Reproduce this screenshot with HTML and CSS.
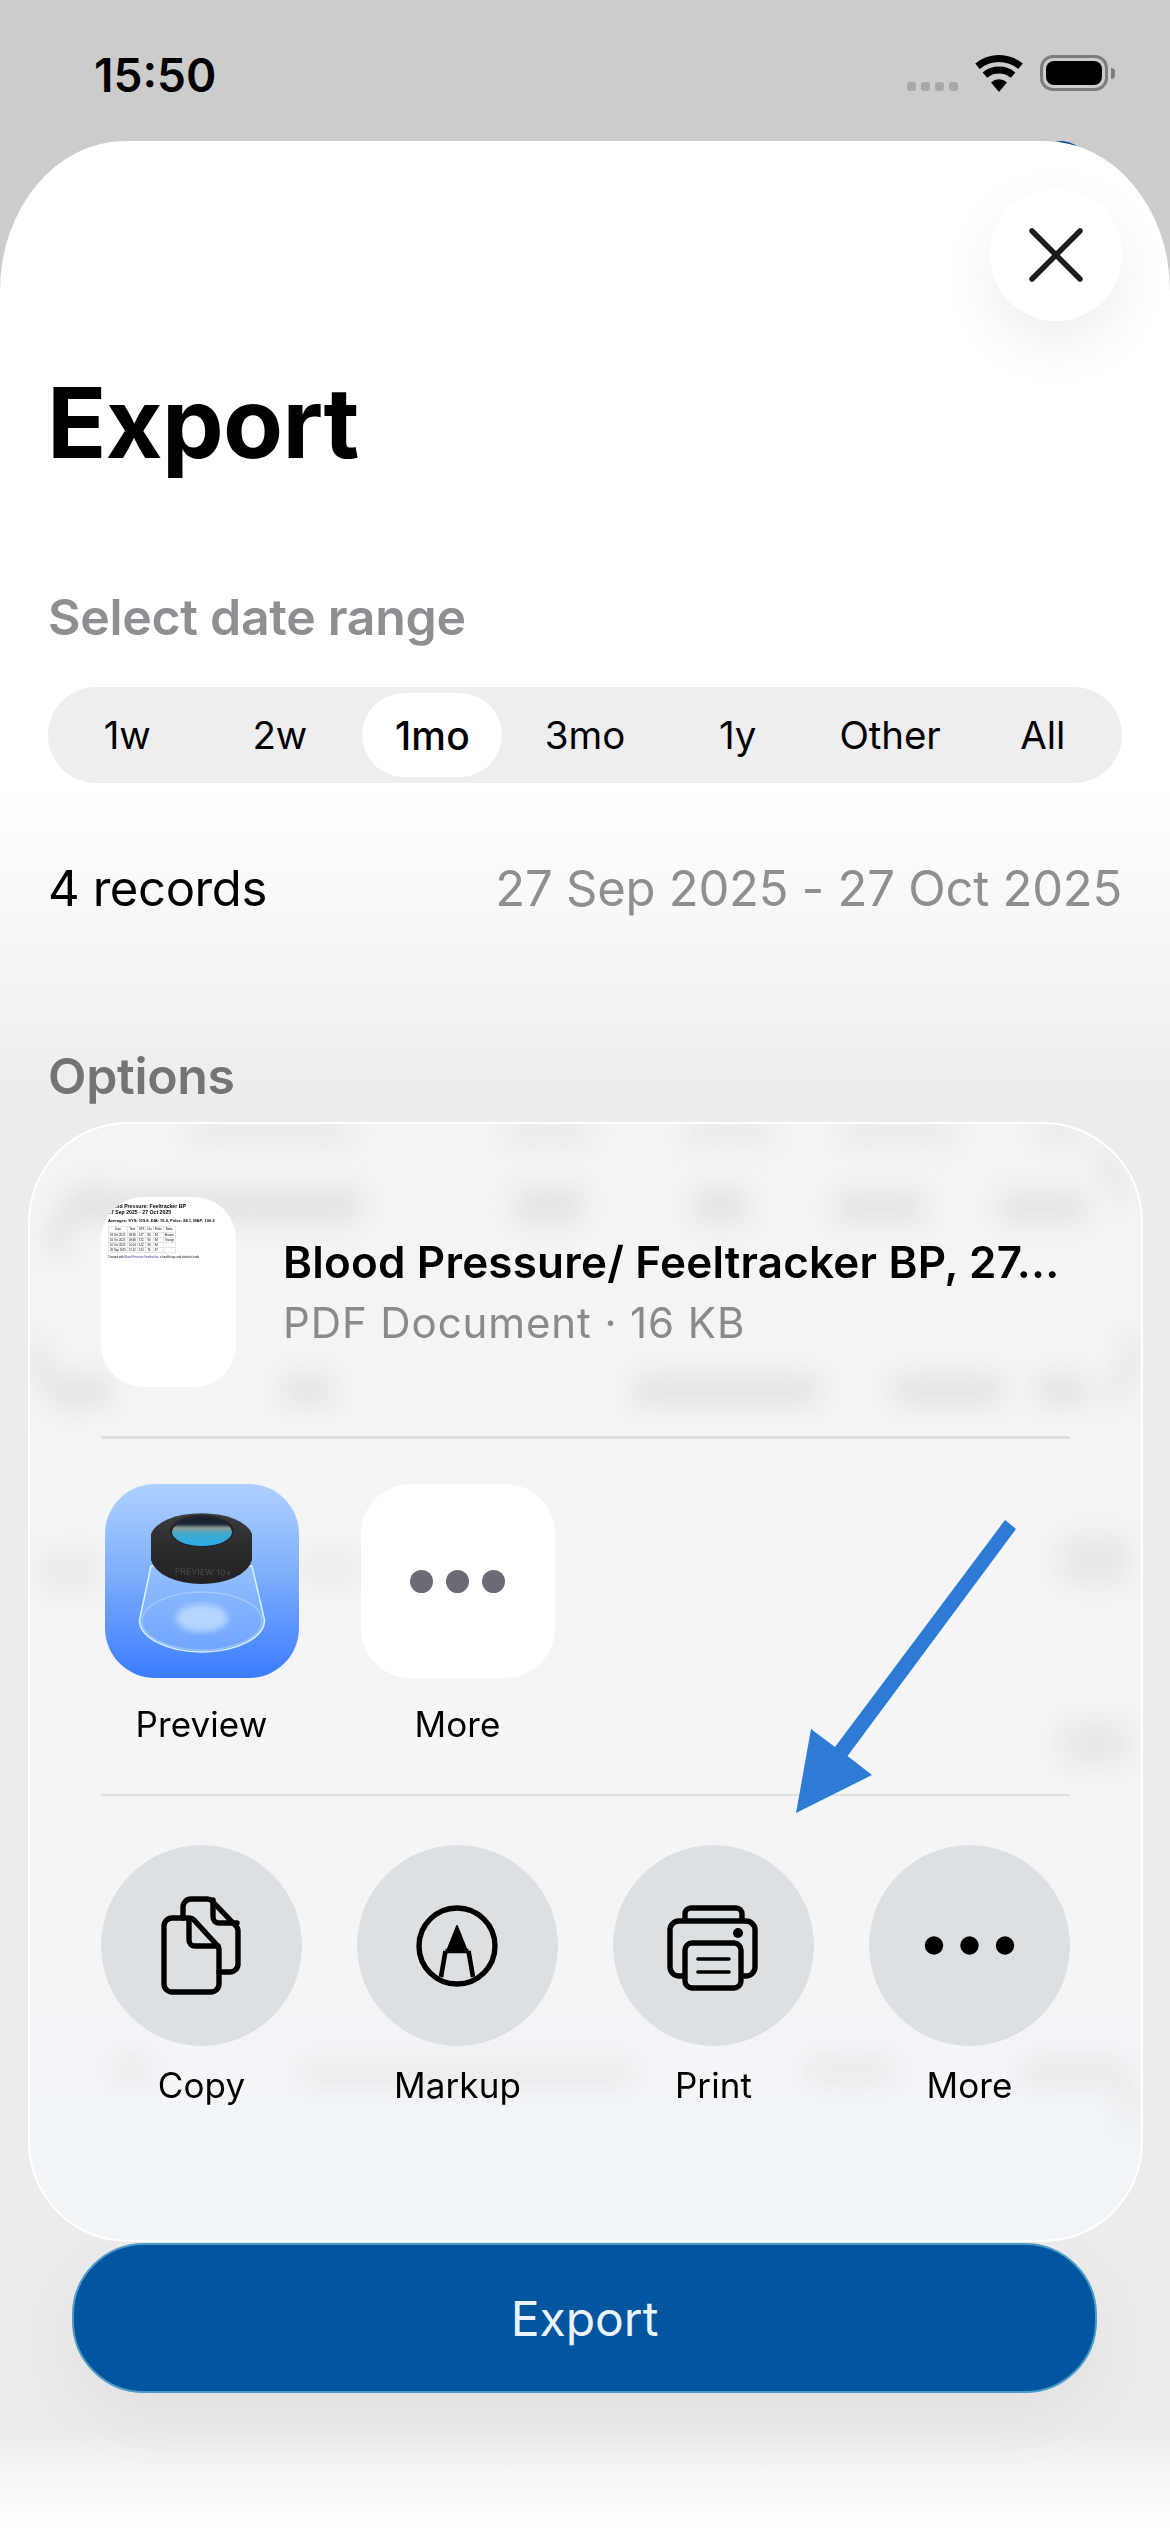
FILE: index.html
```html
<!DOCTYPE html>
<html lang="en">
<head>
<meta charset="utf-8">
<title>Export</title>
<link rel="stylesheet" href="styles.css">
</head>
<body>
<div class="phone">
  <header class="status">
    <span class="time">15:50</span>
    <div class="status-icons">
      <div class="signal"><i></i><i></i><i></i><i></i></div>
      <svg class="wifi" viewBox="0 0 48 37" width="48" height="37">
        <path d="M2.5 11.3A33.5 33.5 0 0 1 45.5 11.3" fill="none" stroke="#000" stroke-width="7"/>
        <path d="M9.9 20.1A22 22 0 0 1 38.1 20.1" fill="none" stroke="#000" stroke-width="7"/>
        <path d="M24 37L16 27.4A12 12 0 0 1 32 27.4Z" fill="#000"/>
      </svg>
      <div class="battery"><div class="battery-body"><div class="battery-fill"></div></div><div class="battery-nub"></div></div>
    </div>
  </header>
  <div class="peek"></div>

  <main class="sheet">
    <div class="sheet-top">
      <button class="close" aria-label="Close">
        <svg viewBox="0 0 56 56" width="56" height="56"><path d="M4 4L52 52M52 4L4 52" stroke="#1c1c1e" stroke-width="5.5" stroke-linecap="round" fill="none"/></svg>
      </button>
    </div>
    <h1 class="title">Export</h1>
    <h2 class="label">Select date range</h2>
    <div class="segments">
      <span class="seg">1w</span>
      <span class="seg">2w</span>
      <span class="seg seg-on">1mo</span>
      <span class="seg">3mo</span>
      <span class="seg">1y</span>
      <span class="seg">Other</span>
      <span class="seg">All</span>
    </div>
    <div class="records">
      <span class="records-count">4 records</span>
      <span class="records-range">27 Sep 2025 - 27 Oct 2025</span>
    </div>
    <h2 class="label label-options">Options</h2>

    <section class="card">
      <svg class="card-blur" viewBox="28 1122 1115 1120" aria-hidden="true">
        <defs><filter id="soft" x="-20%" y="-20%" width="140%" height="140%"><feGaussianBlur stdDeviation="13"/></filter></defs>
        <g filter="url(#soft)" fill="#dedede" stroke="none" opacity=".8">
          <rect x="190" y="1126" width="160" height="14"/><rect x="507" y="1126" width="83" height="14"/><rect x="687" y="1126" width="85" height="14"/><rect x="843" y="1126" width="112" height="14"/><rect x="1037" y="1126" width="45" height="14"/>
          <rect x="70" y="1190" width="290" height="32"/><rect x="515" y="1190" width="67" height="32"/><rect x="694" y="1190" width="52" height="32"/><rect x="836" y="1193" width="87" height="28"/><rect x="1000" y="1193" width="85" height="28"/>
          <rect x="60" y="1376" width="50" height="28"/><rect x="283" y="1376" width="50" height="28"/><rect x="634" y="1376" width="186" height="28"/><rect x="893" y="1376" width="110" height="28"/><rect x="1037" y="1376" width="50" height="28"/>
          <path d="M58 1255Q55 1205 100 1190" fill="none" stroke="#dedede" stroke-width="18"/>
          <path d="M36 1340Q40 1395 80 1405" fill="none" stroke="#dedede" stroke-width="16"/>
          <path d="M1095 1150Q1122 1170 1122 1200" fill="none" stroke="#dedede" stroke-width="14"/>
          <path d="M1135 1335Q1130 1385 1105 1400" fill="none" stroke="#dedede" stroke-width="14"/>
          <rect x="1060" y="1535" width="70" height="50" opacity=".7"/><rect x="1060" y="1720" width="70" height="46" opacity=".7"/>
          <rect x="40" y="1550" width="60" height="42" opacity=".55"/><rect x="300" y="1550" width="60" height="36" opacity=".45"/>
          <rect x="112" y="2058" width="40" height="24" opacity=".6"/><rect x="300" y="2060" width="334" height="26" opacity=".55"/><rect x="806" y="2058" width="90" height="26" opacity=".6"/><rect x="1022" y="2060" width="105" height="26" opacity=".7"/><rect x="1120" y="2080" width="16" height="50" opacity=".6"/>
        </g>
      </svg>

      <div class="file">
        <div class="thumb">
          <p class="doc-title">Blood Pressure: Feeltracker BP<br>27 Sep 2025 - 27 Oct 2025</p>
          <p class="doc-avg">Averages: SYS: 119.8, DIA: 76.0, Pulse: 84.1, MAP: 100.3</p>
          <table class="doc-table">
            <tr><th>Date</th><th>Time</th><th>SYS</th><th>Dia</th><th>Pulse</th><th>Notes</th></tr>
            <tr><td>18 Oct 2025</td><td>09:56</td><td>127</td><td>84</td><td>84</td><td>Bruises</td></tr>
            <tr><td>16 Oct 2025</td><td>09:48</td><td>172</td><td>90</td><td>84</td><td>Orange</td></tr>
            <tr><td>10 Oct 2025</td><td>10:04</td><td>122</td><td>90</td><td>84</td><td></td></tr>
            <tr><td>28 Sep 2025</td><td>11:12</td><td>124</td><td>76</td><td>87</td><td></td></tr>
          </table>
          <p class="doc-foot">Created with <span class="doc-link">Blood Pressure Feeltracker</span>, a health logs and statistics tools</p>
        </div>
        <div class="file-info">
          <div class="file-name">Blood Pressure/ Feeltracker BP, 27...</div>
          <div class="file-meta">PDF Document · 16 KB</div>
        </div>
      </div>
      <hr class="rule rule-one">

      <div class="grid apps">
        <div class="cell">
          <svg class="app-icon" viewBox="0 0 194 194" width="194" height="194">
            <defs>
              <linearGradient id="appbg" x1="0" y1="0" x2="0" y2="1"><stop offset="0" stop-color="#aed0ff"/><stop offset=".45" stop-color="#7fb0fb"/><stop offset="1" stop-color="#3b7cff"/></linearGradient>
              <linearGradient id="capbg" x1="0" y1="0" x2="0" y2="1"><stop offset="0" stop-color="#3c3c3e"/><stop offset=".45" stop-color="#2c2c2e"/><stop offset="1" stop-color="#222224"/></linearGradient>
              <linearGradient id="lens" x1="0" y1="0" x2="0" y2="1"><stop offset="0" stop-color="#141c2c"/><stop offset=".22" stop-color="#1e2a3c"/><stop offset=".36" stop-color="#8f9c94"/><stop offset=".55" stop-color="#42a8cc"/><stop offset="1" stop-color="#27aeea"/></linearGradient>
              <linearGradient id="glass" x1="0" y1="0" x2="0" y2="1"><stop offset="0" stop-color="#b9dcff" stop-opacity=".3"/><stop offset="1" stop-color="#a6cfff" stop-opacity=".4"/></linearGradient>
              <filter id="spot"><feGaussianBlur stdDeviation="3"/></filter>
            </defs>
            <rect width="194" height="194" rx="50" fill="url(#appbg)"/>
            <path d="M46 82L34.500 136A62.500 32 0 0 0 159.500 136L147 82Z" fill="url(#glass)" stroke="#d4f0ff" stroke-width="1.600"/>
            <ellipse cx="97" cy="137" rx="60" ry="29" fill="none" stroke="#cfe6ff" stroke-opacity=".4" stroke-width="1.500"/>
            <ellipse cx="97" cy="134" rx="26" ry="14" fill="#b5d6ff" filter="url(#spot)"/>
            <path d="M46 50A51 24 0 0 1 147 50L147 76A51 28 0 0 1 46 76Z" fill="url(#capbg)"/>
            <ellipse cx="97" cy="47" rx="32" ry="16" fill="#24242c"/>
            <ellipse cx="97" cy="48" rx="30" ry="14" fill="url(#lens)"/>
            <text class="app-engrave" x="98" y="91" text-anchor="middle" transform="rotate(2 98 91)">PREVIEW 10×</text>
          </svg>
          <span class="cell-label">Preview</span>
        </div>
        <div class="cell">
          <div class="more-tile"><i></i><i></i><i></i></div>
          <span class="cell-label">More</span>
        </div>
      </div>
      <hr class="rule rule-two">

      <div class="grid actions">
        <div class="cell">
          <svg class="action" viewBox="0 0 201 201" width="201" height="201">
            <g fill="none" stroke="#000" stroke-width="5.400" stroke-linejoin="round" stroke-linecap="round">
              <path d="M82 73V62a8 8 0 0 1 8-8H106a7 7 0 0 1 5 2L134 80a8 8 0 0 1 3 6V119a8 8 0 0 1-8 8H118"/>
              <path d="M112 55V72a6 6 0 0 0 6 6H136"/>
              <path d="M71 73H88a7 7 0 0 1 5 2L115 99a8 8 0 0 1 3 6V139a8 8 0 0 1-8 8H71a8 8 0 0 1-8-8V81a8 8 0 0 1 8-8z"/>
              <path d="M88 74V95a6 6 0 0 0 6 6H117"/>
            </g>
          </svg>
          <span class="cell-label cell-label-action">Copy</span>
        </div>
        <div class="cell">
          <svg class="action" viewBox="0 0 201 201" width="201" height="201">
            <circle cx="100" cy="101" r="38" fill="none" stroke="#000" stroke-width="5.400"/>
            <path d="M100 81L110 106H90Z" fill="#000" stroke="#000" stroke-width="2" stroke-linejoin="round"/>
            <path d="M88.500 106H111.500M88.500 106L84 132M111.500 106L116 132" fill="none" stroke="#000" stroke-width="4.600"/>
          </svg>
          <span class="cell-label cell-label-action">Markup</span>
        </div>
        <div class="cell">
          <svg class="action" viewBox="0 0 201 201" width="201" height="201">
            <g fill="none" stroke="#000" stroke-width="5.400" stroke-linejoin="round">
              <path d="M72 74V69a6 6 0 0 1 6-6H123a6 6 0 0 1 6 6V74"/>
              <path d="M72 131H66a9 9 0 0 1-9-9V85a9 9 0 0 1 9-9H133a9 9 0 0 1 9 9V122a9 9 0 0 1-9 9H128"/>
              <rect x="72" y="98" width="56" height="45" rx="7"/>
            </g>
            <path d="M85 114H116M85 127H116" stroke="#000" stroke-width="3.600" stroke-linecap="round"/>
            <circle cx="125" cy="88" r="5" fill="#000"/>
          </svg>
          <span class="cell-label cell-label-action">Print</span>
        </div>
        <div class="cell">
          <svg class="action" viewBox="0 0 201 201" width="201" height="201">
            <circle cx="65" cy="100.500" r="9.200"/><circle cx="100.500" cy="100.500" r="9.200"/><circle cx="136" cy="100.500" r="9.200"/>
          </svg>
          <span class="cell-label cell-label-action">More</span>
        </div>
      </div>
    </section>

    <button class="export">Export</button>
  </main>

  <svg class="arrow" viewBox="790 1515 235 305" width="235" height="305" aria-hidden="true">
    <path d="M1005 1520L1016 1529L847.500 1756L872 1775L796 1813L811 1729L835 1747Z" fill="#2d7bd4"/>
  </svg>
</div>
</body>
</html>
```

FILE: styles.css
```css
* { box-sizing: border-box; }
html, body { margin: 0; padding: 0; }
body { background: #fff; font-family: Inter, "Liberation Sans", sans-serif; color: #000; }

.phone { position: relative; width: 1170px; height: 2532px; overflow: hidden; background: #ccc; }

/* Status bar */
.status { height: 141px; padding: 50px 55px 0 94px; display: flex; justify-content: space-between; align-items: flex-start; }
.time { font-size: 46px; line-height: 50px; font-weight: 600; letter-spacing: 0; }
.status-icons { display: flex; align-items: flex-start; padding-top: 5px; }
.signal { display: flex; gap: 5px; margin: 27px 17px 0 0; }
.signal i { display: block; width: 9px; height: 9px; border-radius: 3px; background: #a8a8a8; }
.wifi { display: block; margin-right: 17px; }
.battery { display: flex; align-items: center; }
.battery-body { width: 68px; height: 36px; padding: 3px; border: 3px solid #7d7d7d; border-radius: 13px; }
.battery-fill { width: 100%; height: 100%; background: #000; border-radius: 8px; }
.battery-nub { width: 4px; height: 11px; margin-left: 3px; background: #7d7d7d; border-radius: 0 4px 4px 0; }
.peek { position: absolute; left: 1038px; top: 141px; width: 46px; height: 40px; border-radius: 50%; background: #0a4f98; }

/* Sheet */
.sheet {
  position: relative; height: 2391px; padding: 0 48px 0 50px;
  border-radius: 125px 125px 0 0 / 150px 150px 0 0;
  background: linear-gradient(180deg, #fff 640px, #f3f3f3 860px, #ececec 960px, #ececec 2290px, #f6f6f6 2334px, #fff 2391px);
}
.sheet-top { display: flex; justify-content: flex-end; padding-top: 47px; }
.close {
  width: 132px; height: 133px; padding: 0; border: 0; border-radius: 50%; background: #fff;
  display: flex; align-items: center; justify-content: center;
  box-shadow: 0 22px 60px rgba(0, 0, 0, .07);
}
.title { margin: 52px 0 0 -3px; font-size: 98px; line-height: 100px; font-weight: 700; letter-spacing: -.7px; }
.label { margin: 114px 0 0 -2px; font-size: 50px; line-height: 60px; font-weight: 600; color: #8e8e93; letter-spacing: -.3px; }
.label-options { margin-top: 127px; color: #747474; }

.segments {
  margin: 40px 0 0 -2px; height: 96px; padding: 0 3px; border-radius: 48px; background: #eeeef0;
  display: grid; grid-template-columns: repeat(7, 1fr); align-items: center; justify-items: center;
}
.seg { width: 140px; height: 84px; border-radius: 42px; display: flex; align-items: center; justify-content: center; font-size: 38.500px; font-weight: 400; letter-spacing: -.1px; }
.seg-on { background: #fff; font-weight: 500; font-size: 39px; letter-spacing: .2px; }

.records { margin-top: 76px; display: flex; justify-content: space-between; font-size: 49px; line-height: 60px; letter-spacing: -.25px; }
.records-count { margin-left: -2px; letter-spacing: -.4px; }
.records-range { color: #8e8e93; }

/* Share card */
.card {
  position: relative; overflow: hidden; width: 1115px; height: 1120px; margin: 16px 0 0 -22px;
  padding: 73px 71px 0; border: 2px solid #fff; border-radius: 100px;
  background: linear-gradient(180deg, #f4f4f5 0%, #f5f5f6 55%, #f2f5f8 100%);
}
.card-blur { position: absolute; left: -2px; top: -2px; width: 1115px; height: 1120px; }

.file { position: relative; display: flex; align-items: center; gap: 47px; }
.thumb { flex: none; width: 135px; height: 190px; padding: 6px 0 0 7px; overflow: hidden; border-radius: 42px; background: #fff; font-family: "Liberation Sans", sans-serif; }
.thumb p { margin: 0; white-space: nowrap; }
.doc-title { font-size: 5.200px; line-height: 6.200px; font-weight: 700; }
.thumb .doc-avg { margin-top: 3px; font-size: 4px; line-height: 5px; font-weight: 700; }
.doc-table { margin-top: 3px; border-collapse: collapse; font-size: 2.800px; line-height: 4.200px; }
.doc-table th, .doc-table td { padding: 0 1px; border: 1px solid #e6e6e6; font-weight: 400; white-space: nowrap; }
.thumb .doc-foot { margin-top: 2px; font-size: 2.800px; line-height: 4px; }
.doc-link { color: #3a2f9a; }

.file-info { min-width: 0; }
.file-name { font-size: 44px; line-height: 52px; font-weight: 600; white-space: nowrap; letter-spacing: .2px; }
.file-meta { margin-top: 10px; font-size: 42px; line-height: 50px; color: #8a8a8c; letter-spacing: .9px; }

.rule { position: relative; margin: 0; border: 0; background: #dfdfe1; }
.rule-one { margin-top: 49px; height: 3px; }
.rule-two { margin-top: 48px; height: 2px; }

.grid { position: relative; display: grid; grid-template-columns: repeat(4, 201px); column-gap: 55px; }
.apps { margin-top: 45px; }
.actions { margin-top: 49px; }
.cell { display: flex; flex-direction: column; align-items: center; }
.cell-label { margin-top: 24px; font-size: 35px; line-height: 44px; color: #000; letter-spacing: .1px; }
.cell-label-action { margin-top: 17px; }

.app-icon { display: block; }
.app-engrave { font-family: Inter, sans-serif; font-size: 8.500px; fill: #4d4d50; letter-spacing: .2px; }
.more-tile { width: 194px; height: 194px; border-radius: 50px; background: #fff; display: flex; align-items: center; justify-content: center; gap: 13px; }
.more-tile i { display: block; width: 23px; height: 23px; border-radius: 50%; background: #6a6a75; }
.action { display: block; border-radius: 50%; background: #dde0e2; }

.export {
  display: block; width: 1025px; height: 150px; margin: 1px 0 0 22px; padding: 0;
  border: 2px solid #4d9ac7; border-radius: 72px; background: #02559f;
  font-family: Inter, sans-serif; font-size: 48px; font-weight: 400; color: #eaf3fb;
  box-shadow: 0 24px 70px rgba(0, 0, 0, .05);
}

.arrow { position: absolute; left: 790px; top: 1515px; }
```
